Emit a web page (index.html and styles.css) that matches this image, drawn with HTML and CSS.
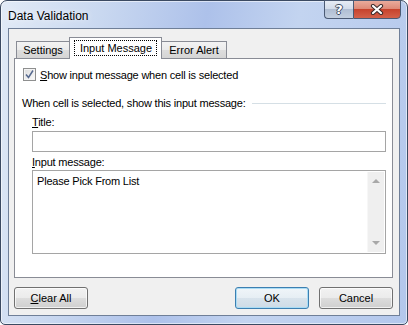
FILE: index.html
```html
<!DOCTYPE html>
<html lang="en">
<head>
    <meta charset="UTF-8">
    <title>Data Validation</title>
    <link rel="stylesheet" href="styles.css">
</head>
<body>
    <div class="window">
        <div class="titlebar">
            <span class="caption">Data Validation</span>
            <div class="caption-buttons">
                <span class="cap-btn help">?</span>
                <span class="cap-btn close">
                    <svg width="14" height="11" viewBox="0 0 14 11">
                        <path d="M3 2 L11 9 M11 2 L3 9" stroke="#3a2a2a" stroke-width="4.2" stroke-linecap="round"/>
                        <path d="M3 2 L11 9 M11 2 L3 9" stroke="#fff" stroke-width="2.2" stroke-linecap="round"/>
                    </svg>
                </span>
            </div>
        </div>

        <div class="client">
            <div class="tabs">
                <div class="tab tab-settings">Settings</div>
                <div class="tab tab-input selected"><span class="focus">Input Message</span></div>
                <div class="tab tab-error">Error Alert</div>
            </div>

            <div class="panel">
                <label class="check-row">
                    <span class="checkbox">
                        <svg width="11" height="11" viewBox="0 0 11 11">
                            <path d="M2 5.5 L4.5 8.5 L9 1.5" fill="none" stroke="#56698f" stroke-width="1.5"/>
                        </svg>
                    </span>
                    <span><u>S</u>how input message when cell is selected</span>
                </label>

                <div class="group-label">When cell is selected, show this input message:</div>

                <div class="fields">
                    <div class="field-label"><u>T</u>itle:</div>
                    <div class="textbox"></div>

                    <div class="field-label msg-label"><u>I</u>nput message:</div>
                    <div class="textarea">
                        <div class="textarea-text">Please Pick From List</div>
                        <div class="scrollbar">
                            <span class="arrow up"></span>
                            <span class="arrow down"></span>
                        </div>
                    </div>
                </div>
            </div>

            <div class="button-row">
                <button class="btn"><u>C</u>lear All</button>
                <button class="btn default">OK</button>
                <button class="btn">Cancel</button>
            </div>
        </div>
    </div>
</body>
</html>
```

FILE: styles.css
```css
body {
    margin: 0;
    background: #fff;
    font-family: 'Liberation Sans', Arial, sans-serif;
    font-size: 11px;
    color: #000;
}

.window {
    width: 408px;
    height: 325px;
    box-sizing: border-box;
    border: 1px solid #3b4a62;
    border-radius: 7px 7px 5px 5px;
    padding: 0 7px 8px 7px;
    background: linear-gradient(100deg, #e1eaf6 0%, #c9d8f0 22%, #adc1ea 45%, #c3d4f0 65%, #b3c7ec 100%);
    box-shadow: inset 0 0 0 1px rgba(255, 255, 255, 0.55);
}

.titlebar {
    height: 27px;
    display: flex;
    justify-content: space-between;
    align-items: flex-start;
}

.caption {
    padding-top: 8px;
    line-height: 14px;
    font-size: 12px;
    text-shadow: 0 0 6px rgba(255, 255, 255, 0.9);
}

.caption-buttons {
    display: flex;
    margin-top: -1px;
    margin-right: -1px;
}

.cap-btn {
    height: 19px;
    box-sizing: border-box;
    border: 1px solid #4b5a74;
    display: flex;
    align-items: center;
    justify-content: center;
}

.help {
    width: 29px;
    border-right: none;
    border-radius: 0 0 0 4px;
    background: linear-gradient(#e6ecf5 0%, #d3dcea 45%, #b0bed3 50%, #c3cfe0 100%);
    color: #fff;
    font-family: 'DejaVu Sans', sans-serif;
    font-weight: bold;
    font-size: 13px;
    text-shadow: 1px 0 0 #3f4d63, -1px 0 0 #3f4d63, 0 1px 0 #3f4d63, 0 -1px 0 #3f4d63;
}

.close {
    width: 48px;
    border-radius: 0 0 4px 0;
    background: linear-gradient(#e9ab9c 0%, #dd8a78 45%, #c7432d 50%, #d4614a 100%);
}

.client {
    height: 288px;
    box-sizing: border-box;
    border: 1px solid #6f7f98;
    background: #f0f0f0;
    padding: 8px 6px 0 5px;
}

/* tabs */
.tabs {
    display: flex;
    align-items: flex-end;
    height: 21px;
    padding-left: 2px;
}

.tab {
    box-sizing: border-box;
    height: 17px;
    border: 1px solid #898c95;
    border-bottom: none;
    display: flex;
    align-items: center;
    justify-content: center;
    background: linear-gradient(#f3f3f3 0%, #ebebeb 50%, #dddddd 51%, #d5d5d5 100%);
}

.tab-settings {
    width: 53px;
    border-right: none;
}

.tab-input {
    width: 93px;
}

.tab-error {
    width: 65px;
    border-left: none;
}

.tab.selected {
    height: 22px;
    margin-bottom: -1px;
    background: #fff;
    position: relative;
    z-index: 1;
    padding-bottom: 2px;
}

.focus {
    outline: 1px dotted #000;
    padding: 1px 4px 0 5px;
    line-height: 13px;
}

.panel {
    height: 220px;
    box-sizing: border-box;
    border: 1px solid #898c95;
    background: #fff;
    padding: 9px 6px 0 7px;
    letter-spacing: -0.2px;
}

.check-row {
    display: flex;
    align-items: center;
    gap: 4px;
    height: 13px;
    padding-left: 1px;
}

.checkbox {
    width: 13px;
    height: 13px;
    box-sizing: border-box;
    border: 1px solid #8e8f8f;
    background: linear-gradient(135deg, #dcdcdc, #fbfbfb);
    box-shadow: inset 0 0 0 1px #f4f4f4;
    display: flex;
    align-items: center;
    justify-content: center;
}

.group-label {
    display: flex;
    align-items: center;
    margin-top: 15px;
    line-height: 14px;
}

.group-label::after {
    content: "";
    flex: 1;
    margin-left: 6px;
    border-top: 1px solid #d5dfe5;
}

.fields {
    padding-left: 10px;
}

.field-label {
    line-height: 14px;
    margin-top: 5px;
}

.msg-label {
    margin-top: 3px;
}

.textbox {
    margin-top: 2px;
    height: 21px;
    box-sizing: border-box;
    border: 1px solid #a5a5a5;
    background: #fff;
}

.textarea {
    margin-top: 1px;
    height: 84px;
    box-sizing: border-box;
    border: 1px solid #a5a5a5;
    display: flex;
    justify-content: space-between;
    padding: 1px;
}

.textarea-text {
    padding: 2px 3px;
    line-height: 14px;
}

.scrollbar {
    width: 17px;
    box-sizing: border-box;
    background: #efefef;
    border-left: 1px solid #f7f7f7;
    display: flex;
    flex-direction: column;
    justify-content: space-between;
    align-items: center;
    padding: 7px 0 7px 0;
}

.arrow {
    width: 0;
    height: 0;
    border-left: 4px solid transparent;
    border-right: 4px solid transparent;
}

.arrow.up {
    border-bottom: 4px solid #a8a8a8;
}

.arrow.down {
    border-top: 4px solid #a8a8a8;
}

/* buttons */
.button-row {
    display: flex;
    margin-top: 9px;
    gap: 10px;
}

.btn {
    width: 74px;
    height: 22px;
    box-sizing: border-box;
    border: 1px solid #707070;
    border-radius: 3px;
    background: linear-gradient(#f2f2f2 0%, #ebebeb 50%, #dddddd 51%, #cfcfcf 100%);
    box-shadow: inset 0 0 0 1px rgba(255, 255, 255, 0.7);
    font-family: 'Liberation Sans', Arial, sans-serif;
    font-size: 11px;
    color: #000;
    padding: 0;
}

.btn.default {
    margin-left: auto;
    border-color: #3c7fb1;
    background: linear-gradient(#f0f5f9 0%, #e6eef4 50%, #d8e3ec 51%, #cedbe6 100%);
    box-shadow: inset 0 0 0 1px #a9dcf5;
}
```
